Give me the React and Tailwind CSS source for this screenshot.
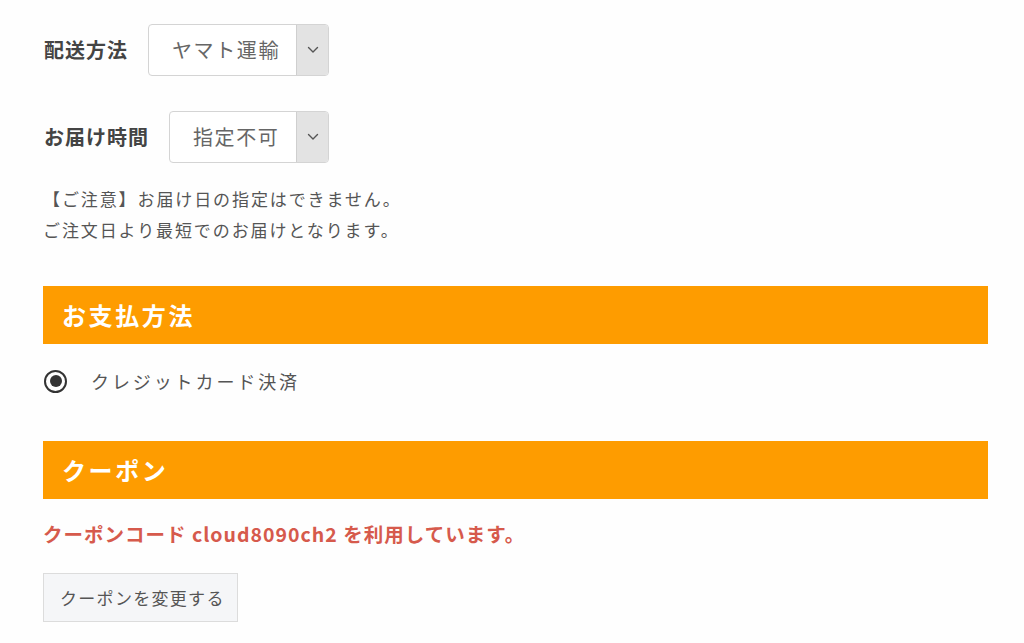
import React from 'react';

const Chevron = () => (
  <svg width="12" height="8" viewBox="0 0 12 8" fill="none">
    <path d="M1.5 1.5 L6 6 L10.5 1.5" stroke="#555" strokeWidth="1.4" strokeLinecap="round" strokeLinejoin="round" />
  </svg>
);

const Select = ({ value, width }) => (
  <div className={`flex h-[52px] items-stretch overflow-hidden rounded-[4px] border border-[#d4d4d4] bg-white ${width}`}>
    <div className="flex flex-1 items-center pl-[23px] text-[20px] tracking-[1.6px] text-[#666]">{value}</div>
    <div className="flex w-[32px] items-center justify-center border-l border-[#cfcfcf] bg-[#e3e3e3]">
      <Chevron />
    </div>
  </div>
);

const SectionBar = ({ title }) => (
  <div className="flex h-[58px] items-center bg-[#fe9c00] pl-[19px] text-[24px] font-bold tracking-[2.6px] text-white">
    {title}
  </div>
);

export default function App() {
  return (
    <div className="min-h-screen bg-[#fefefe] pt-[24px] font-['Noto_Sans_CJK_JP','Noto_Sans',sans-serif]">
      <div className="ml-[43px] w-[945px]">
        {/* 配送方法 */}
        <div className="flex items-center gap-[20px]">
          <span className="pl-[1px] text-[20px] font-bold tracking-[1px] text-[#444]">配送方法</span>
          <Select value="ヤマト運輸" width="w-[181px]" />
        </div>

        {/* お届け時間 */}
        <div className="mt-[35px] flex items-center gap-[20px]">
          <span className="pl-[1px] text-[20px] font-bold tracking-[1px] text-[#444]">お届け時間</span>
          <Select value="指定不可" width="w-[160px]" />
        </div>

        <div className="mt-[20px] text-[17px] leading-[31px] tracking-[1.9px] text-[#555]">
          <p>【ご注意】お届け日の指定はできません。</p>
          <p>ご注文日より最短でのお届けとなります。</p>
        </div>

        {/* お支払方法 */}
        <div className="mt-[41px]">
          <SectionBar title="お支払方法" />
        </div>

        <label className="mt-[25px] flex h-[24px] items-center">
          <span className="ml-[1px] flex h-[23px] w-[23px] items-center justify-center rounded-full border-[2px] border-[#333]">
            <span className="h-[12px] w-[12px] rounded-full bg-[#333]" />
          </span>
          <span className="ml-[24px] text-[18px] tracking-[2.9px] text-[#555]">クレジットカード決済</span>
        </label>

        {/* クーポン */}
        <div className="mt-[48px]">
          <SectionBar title="クーポン" />
        </div>

        <p className="mt-[21px] text-[19.5px] font-bold leading-[28px] tracking-[1px] text-[#d65a4c]">
          クーポンコード cloud8090ch2 を利用しています。
        </p>

        <button className="mt-[25px] flex h-[49px] w-[195px] items-center border border-[#dcdcdc] bg-[#f5f6f8] pl-[16px] text-[17px] tracking-[1.3px] text-[#555]">
          クーポンを変更する
        </button>
      </div>
    </div>
  );
}
